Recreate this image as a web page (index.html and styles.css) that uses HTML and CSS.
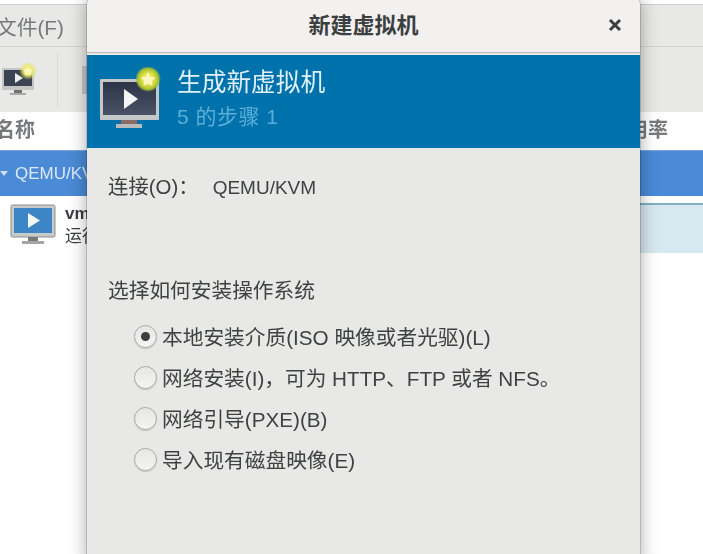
FILE: index.html
```html
<!DOCTYPE html>
<html lang="zh-CN">
<head>
	<meta charset="UTF-8">
	<title>新建虚拟机</title>
	<link rel="stylesheet" href="styles.css">
</head>
<body>
	<div class="manager">
		<div class="menubar"><span>文件(F)</span></div>
		<div class="toolbar">
			<svg class="tool-icon" viewBox="0 0 36 36">
				<defs>
					<radialGradient id="glow-small">
						<stop offset="0.45" stop-color="#f2ee70"/>
						<stop offset="1" stop-color="#d8e040" stop-opacity="0"/>
					</radialGradient>
				</defs>
				<rect x="1" y="6" width="32" height="22" rx="1" fill="#c4c6c6"/>
				<rect x="3" y="8" width="28" height="16" fill="#3a4254"/>
				<path d="M14 11v10l8-5z" fill="#eee"/>
				<rect x="13" y="28" width="8" height="3" fill="#7a6e6a"/>
				<rect x="9" y="31" width="16" height="2" fill="#aaa"/>
				<circle cx="27" cy="9" r="9" fill="url(#glow-small)"/>
				<path d="M27 4l1.500 3.300 3.500.4-2.600 2.400.7 3.500-3.100-1.800-3.100 1.800.7-3.500-2.600-2.400 3.500-.4z" fill="#fdf8c0"/>
			</svg>
			<div class="tool-sep"></div>
			<div class="tool-stub"></div>
		</div>
		<div class="list-head">
			<span class="name-col">名称</span>
			<span class="rate-col">用率</span>
		</div>
		<div class="conn-row"><span class="arrow"></span><span>QEMU/KVM</span></div>
		<div class="vm-row">
			<svg class="vm-icon" viewBox="0 0 46 42">
				<rect x="1" y="1" width="44" height="32" rx="1.500" fill="#c9cbcb" stroke="#8b8d8d"/>
				<rect x="4" y="4" width="38" height="25" fill="#3c86c6"/>
				<path d="M18 9v15l12-7.500z" fill="#f4f6f6"/>
				<rect x="18" y="33" width="10" height="4" fill="#77797a"/>
				<rect x="12" y="37" width="22" height="3" fill="#a3a5a6"/>
			</svg>
			<div class="vm-text">
				<b>vm1</b>
				<span>运行中</span>
			</div>
			<div class="vm-graph"></div>
		</div>
	</div>

	<div class="dialog">
		<div class="titlebar">
			<span class="title">新建虚拟机</span>
			<svg class="close" viewBox="0 0 14 14">
				<path d="M2 2l10 10M12 2L2 12" stroke="#3c3f40" stroke-width="3" fill="none"/>
			</svg>
		</div>
		<div class="banner">
			<svg class="banner-icon" viewBox="0 0 62 62">
				<defs>
					<radialGradient id="glow">
						<stop offset="0.4" stop-color="#e6e84e"/>
						<stop offset="0.8" stop-color="#a8c030"/>
						<stop offset="1" stop-color="#80ae50" stop-opacity="0"/>
					</radialGradient>
					<linearGradient id="screen" x1="0" y1="0" x2="0" y2="1">
						<stop offset="0" stop-color="#2c3448"/>
						<stop offset="1" stop-color="#4a5266"/>
					</linearGradient>
				</defs>
				<rect x="1" y="12" width="59" height="41" rx="1" fill="#c6c8c8"/>
				<rect x="4" y="15" width="53" height="33" fill="url(#screen)"/>
				<path d="M25 22v20l14-10z" fill="#f4f4f4"/>
				<rect x="22" y="53" width="16" height="4" fill="#8a6a62"/>
				<rect x="17" y="57" width="26" height="4" fill="#b9bbbb"/>
				<circle cx="49" cy="12" r="13" fill="url(#glow)"/>
				<path d="M49 5l2.200 4.800 5.200.6-3.800 3.500 1 5.100-4.600-2.600-4.600 2.600 1-5.100-3.800-3.500 5.200-.6z" fill="#fdf6c0"/>
			</svg>
			<div class="banner-text">
				<div class="banner-title">生成新虚拟机</div>
				<div class="banner-step">5 的步骤 1</div>
			</div>
		</div>
		<div class="content">
			<div class="connection">连接(O)：<span class="conn-name">QEMU/KVM</span></div>
			<div class="choose">选择如何安装操作系统</div>
			<div class="options">
				<div class="option"><span class="radio checked"></span>本地安装介质(ISO 映像或者光驱)(L)</div>
				<div class="option"><span class="radio"></span>网络安装(I)，可为 HTTP、FTP 或者 NFS。</div>
				<div class="option"><span class="radio"></span>网络引导(PXE)(B)</div>
				<div class="option"><span class="radio"></span>导入现有磁盘映像(E)</div>
			</div>
		</div>
	</div>
</body>
</html>
```

FILE: styles.css
```css
html, body {
	margin: 0;
	height: 100%;
	overflow: hidden;
}

body {
	position: relative;
	width: 703px;
	height: 554px;
	background: #fff;
	font-family: "Liberation Sans", "Noto Sans CJK SC", sans-serif;
	color: #3c3f40;
	filter: blur(0.4px);
}

.manager {
	display: flex;
	flex-direction: column;
}

.menubar {
	height: 43px;
	margin-top: 4px;
	display: flex;
	align-items: center;
	background: #e8e8e6;
	border-top: 1px solid #cfcfcc;
	border-bottom: 1px solid #d4d4d1;
	box-sizing: border-box;
	font-size: 20.700px;
	color: #77797a;
}

.menubar span {
	margin-left: -4px;
}

.toolbar {
	height: 65px;
	display: flex;
	align-items: center;
	background: #e8e8e6;
}

.tool-icon {
	width: 36px;
	height: 36px;
	margin-left: 1px;
}

.tool-sep {
	width: 1px;
	height: 56px;
	margin-left: 20px;
	background: #d8d8d5;
}

.tool-stub {
	width: 6px;
	height: 28px;
	margin-left: 24px;
	background: #c4c5c4;
}

.list-head {
	height: 38px;
	padding-bottom: 6px;
	box-sizing: border-box;
	display: flex;
	justify-content: space-between;
	align-items: center;
	background: #fff;
	font-size: 20px;
	font-weight: bold;
	color: #77797a;
}

.name-col {
	margin-left: -5px;
}

.rate-col {
	margin-right: 35px;
}

.conn-row {
	height: 46px;
	display: flex;
	align-items: center;
	gap: 7px;
	background: #4a8ad6;
	border-top: 1px solid #7aa8de;
	box-sizing: border-box;
	font-size: 17px;
	color: #dbe8f6;
}

.arrow {
	width: 0;
	height: 0;
	border-left: 4px solid transparent;
	border-right: 4px solid transparent;
	border-top: 5px solid #cfe0f4;
}

.vm-row {
	height: 57px;
	display: flex;
	align-items: center;
	background: #fff;
}

.vm-icon {
	width: 46px;
	height: 42px;
	margin-left: 10px;
}

.vm-text {
	display: flex;
	flex-direction: column;
	margin-left: 9px;
	font-size: 17px;
	line-height: 23px;
	color: #3c3f40;
}

.vm-graph {
	margin-left: auto;
	width: 320px;
	height: 50px;
	margin-top: 7px;
	background: #d6e8f0;
	border-top: 2px solid #7fb0bd;
	box-sizing: border-box;
}

.dialog {
	position: absolute;
	left: 87px;
	top: -3px;
	width: 553px;
	height: 570px;
	border-radius: 8px 8px 0 0;
	background: #e8e8e6;
	box-shadow: 0 0 18px rgba(0, 0, 0, 0.35), 0 0 0 1px rgba(0, 0, 0, 0.15);
}

.titlebar {
	height: 56px;
	padding-bottom: 3px;
	position: relative;
	display: flex;
	align-items: center;
	justify-content: center;
	background: #f2f1f0;
	border-radius: 8px 8px 0 0;
	border-bottom: 1px solid #b8b8b6;
	box-sizing: border-box;
}

.title {
	font-size: 22px;
	font-weight: bold;
	color: #3c3f40;
}

.close {
	position: absolute;
	right: 18px;
	top: 21px;
	width: 14px;
	height: 14px;
}

.banner {
	height: 93px;
	margin-top: 2px;
	display: flex;
	background: #0072ab;
}

.banner-icon {
	width: 62px;
	height: 62px;
	margin: 12px 0 0 12px;
}

.banner-text {
	margin: 11px 0 0 16px;
}

.banner-title {
	font-size: 24.700px;
	line-height: 33px;
	color: #dff0f8;
}

.banner-step {
	margin-top: 4px;
	font-size: 21px;
	line-height: 28px;
	letter-spacing: 0.500px;
	color: #5aaed8;
}

.content {
	padding: 25px 0 0 21px;
	font-size: 20.700px;
	color: #3f4142;
}

.connection {
	line-height: 28px;
	height: 28px;
	font-size: 20.400px;
}

.conn-name {
	margin-left: 14px;
	font-size: 19px;
}

.choose {
	margin-top: 76px;
	line-height: 28px;
}

.options {
	margin-top: 17px;
	margin-left: 26px;
	display: flex;
	flex-direction: column;
	gap: 13px;
}

.option {
	display: flex;
	align-items: center;
	height: 28px;
}

.radio {
	width: 23px;
	height: 23px;
	margin-right: 5px;
	border: 1px solid #a8a8a6;
	border-radius: 50%;
	box-sizing: border-box;
	background: linear-gradient(#e6e6e4, #f4f4f2);
	box-shadow: 0 1px 1px rgba(0, 0, 0, 0.15);
	display: flex;
	align-items: center;
	justify-content: center;
	flex: none;
}

.radio.checked::after {
	content: "";
	width: 9px;
	height: 9px;
	border-radius: 50%;
	background: #3c3f40;
}
```
